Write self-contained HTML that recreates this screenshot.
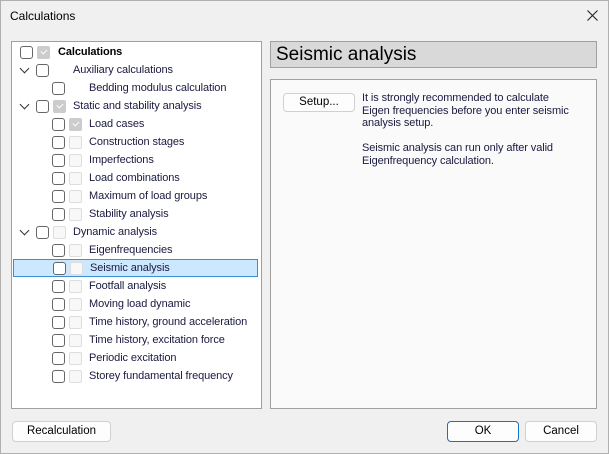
<!DOCTYPE html>
<html><head><style>
*{box-sizing:border-box;margin:0;padding:0}
body{width:609px;height:454px;background:#f0f0f0;font-family:"Liberation Sans",sans-serif;font-size:11px;color:#1a1a40;position:relative;overflow:hidden;box-shadow:inset 0 0 0 1px #b0b0b0}
.abs{position:absolute}
.title{left:10px;top:9px;font-size:12px;color:#000}
.tree{left:11px;top:41px;width:251px;height:368px;background:#fff;border:1px solid #a0a0a0}
.row{position:absolute;left:0;height:18px;width:249px;line-height:18px;white-space:nowrap}
.cb{position:absolute;top:3px;width:13px;height:13px;border:1px solid #666;border-radius:3px;background:#fff}
.cb2{position:absolute;top:3px;width:13px;height:13px;border:1px solid #ddd;border-radius:2px;background:#f8f8f8}
.cb2.g{background:#ccc;border-color:#ccc}
.cb2.g::after{content:"";position:absolute;left:3px;top:2px;width:5px;height:3px;border-left:1px solid #fff;border-bottom:1px solid #fff;transform:rotate(-45deg)}
.chev{position:absolute;left:9px;top:4px;width:7px;height:7px;border-right:1.3px solid #333;border-bottom:1.3px solid #333;transform:rotate(45deg)}
.t{position:absolute;letter-spacing:-0.1px}
.sel{background:#cce8ff;border:1px solid #3c8fd6;left:1px;width:245px}
.hdr{left:270px;top:41px;width:327px;height:27px;background:#d9d9d9;border:1px solid #a0a0a0;font-size:19px;color:#000;padding-left:5px;line-height:25px}
.pane{left:270px;top:79px;width:327px;height:330px;background:#fafafa;border:1px solid #a0a0a0}
.btn{position:absolute;background:#fdfdfd;border:1px solid #d0d0d0;border-radius:4px;text-align:center;font-size:11.5px;color:#000}
.txt{left:362px;top:92px;line-height:12.5px;color:#1a1a40;font-size:11px;letter-spacing:-0.1px}
</style></head><body>
<div class="abs title">Calculations</div>
<svg class="abs" style="left:587px;top:10px" width="11" height="11" viewBox="0 0 11 11"><path d="M0.5 0.5L10.5 10.5M10.5 0.5L0.5 10.5" stroke="#222" stroke-width="1.1"/></svg>
<div class="abs tree">
<div class="row" style="top:1px"><div class="cb" style="left:8px"></div><div class="cb2 g" style="left:25px"></div><b class="t" style="left:46px;color:#000">Calculations</b></div>
<div class="row" style="top:19px"><div class="chev"></div><div class="cb" style="left:24px"></div><span class="t" style="left:61px">Auxiliary calculations</span></div>
<div class="row" style="top:37px"><div class="cb" style="left:40px"></div><span class="t" style="left:77px">Bedding modulus calculation</span></div>
<div class="row" style="top:55px"><div class="chev"></div><div class="cb" style="left:24px"></div><div class="cb2 g" style="left:41px"></div><span class="t" style="left:61px">Static and stability analysis</span></div>
<div class="row" style="top:73px"><div class="cb" style="left:40px"></div><div class="cb2 g" style="left:57px"></div><span class="t" style="left:77px">Load cases</span></div>
<div class="row" style="top:91px"><div class="cb" style="left:40px"></div><div class="cb2" style="left:57px"></div><span class="t" style="left:77px">Construction stages</span></div>
<div class="row" style="top:109px"><div class="cb" style="left:40px"></div><div class="cb2" style="left:57px"></div><span class="t" style="left:77px">Imperfections</span></div>
<div class="row" style="top:127px"><div class="cb" style="left:40px"></div><div class="cb2" style="left:57px"></div><span class="t" style="left:77px">Load combinations</span></div>
<div class="row" style="top:145px"><div class="cb" style="left:40px"></div><div class="cb2" style="left:57px"></div><span class="t" style="left:77px">Maximum of load groups</span></div>
<div class="row" style="top:163px"><div class="cb" style="left:40px"></div><div class="cb2" style="left:57px"></div><span class="t" style="left:77px">Stability analysis</span></div>
<div class="row" style="top:181px"><div class="chev"></div><div class="cb" style="left:24px"></div><div class="cb2" style="left:41px"></div><span class="t" style="left:61px">Dynamic analysis</span></div>
<div class="row" style="top:199px"><div class="cb" style="left:40px"></div><div class="cb2" style="left:57px"></div><span class="t" style="left:77px">Eigenfrequencies</span></div>
<div class="row sel" style="top:217px"><div class="cb" style="left:39px;top:2px"></div><div class="cb2" style="left:56px;top:2px"></div><span class="t" style="left:76px;top:-1px">Seismic analysis</span></div>
<div class="row" style="top:235px"><div class="cb" style="left:40px"></div><div class="cb2" style="left:57px"></div><span class="t" style="left:77px">Footfall analysis</span></div>
<div class="row" style="top:253px"><div class="cb" style="left:40px"></div><div class="cb2" style="left:57px"></div><span class="t" style="left:77px">Moving load dynamic</span></div>
<div class="row" style="top:271px"><div class="cb" style="left:40px"></div><div class="cb2" style="left:57px"></div><span class="t" style="left:77px">Time history, ground acceleration</span></div>
<div class="row" style="top:289px"><div class="cb" style="left:40px"></div><div class="cb2" style="left:57px"></div><span class="t" style="left:77px">Time history, excitation force</span></div>
<div class="row" style="top:307px"><div class="cb" style="left:40px"></div><div class="cb2" style="left:57px"></div><span class="t" style="left:77px">Periodic excitation</span></div>
<div class="row" style="top:325px"><div class="cb" style="left:40px"></div><div class="cb2" style="left:57px"></div><span class="t" style="left:77px">Storey fundamental frequency</span></div>
</div>
<div class="abs hdr">Seismic analysis</div>
<div class="abs pane"></div>
<div class="btn" style="left:283px;top:93px;width:72px;height:19px;line-height:17px">Setup...</div>
<div class="abs txt">It is strongly recommended to calculate<br>Eigen frequencies before you enter seismic<br>analysis setup.<br><br>Seismic analysis can run only after valid<br>Eigenfrequency calculation.</div>
<div class="btn" style="left:12px;top:421px;width:99px;height:21px;line-height:19px">Recalculation</div>
<div class="btn" style="left:447px;top:421px;width:72px;height:21px;line-height:19px;border-color:#1a6fc0">OK</div>
<div class="btn" style="left:525px;top:421px;width:72px;height:21px;line-height:19px">Cancel</div>
</body></html>
